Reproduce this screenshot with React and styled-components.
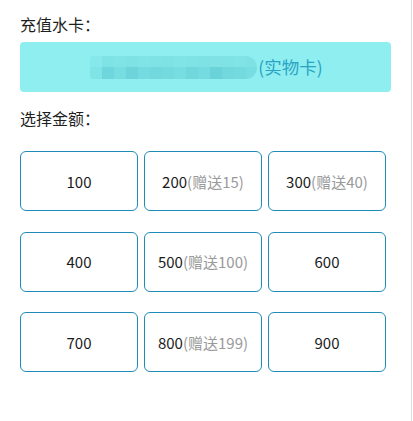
import styled, { createGlobalStyle } from 'styled-components'

const BORDER = '#1e8cb6'
const CARDBG = '#8eeef0'

const GlobalStyle = createGlobalStyle`
	html, body {
		margin: 0;
		padding: 0;
		background: #ffffff;
	}
	body {
		font-family: 'Noto Sans CJK SC', 'Noto Sans', sans-serif;
		color: #222222;
	}
`

const Page = styled.div`
	box-sizing: border-box;
	width: 412px;
	min-height: 100vh;
	padding: 12px 20px 0 20px;
	border-right: 1px solid #dcdcdc;
`

const Label = styled.div`
	font-size: 16px;
	line-height: 24px;
	color: #1f1f1f;
`

const CardBox = styled.div`
	margin: 6px 0 14px 0;
	height: 50px;
	border-radius: 4px;
	background: ${CARDBG};
	display: flex;
	align-items: center;
	justify-content: center;
	padding-left: 2px;
`

const Mosaic = styled.div`
	display: grid;
	grid-template-columns: repeat(14, 12px);
	grid-auto-rows: 11.5px;
	width: 167px;
	overflow: hidden;
	border-radius: 4px 12px 12px 4px;
`

const Cell = styled.span`
	background: ${(p) => p.$c};
`

const CardType = styled.span`
	font-size: 17.5px;
	color: #2ba3c4;
	line-height: 24px;
	margin-left: 1px;
`

const Grid = styled.div`
	display: grid;
	grid-template-columns: repeat(3, 118px);
	grid-auto-rows: 60px;
	column-gap: 6px;
	row-gap: 20.5px;
	margin-top: 21px;
`

const Amount = styled.button`
	box-sizing: border-box;
	border: 1.6px solid ${BORDER};
	border-radius: 6px;
	background: #ffffff;
	font-family: 'Noto Sans CJK SC', 'Noto Sans', sans-serif;
	font-size: 15px;
	color: #1a1a1a;
	padding: 0;
	display: flex;
	align-items: center;
	justify-content: center;
	cursor: pointer;
`

const Bonus = styled.span`
	color: #9a9a9a;
`

const top = [
	'#86e8ea', '#7fe2e5', '#80e3e6', '#7ee1e4', '#80e3e6', '#7fe2e5', '#7ee1e4',
	'#80e3e6', '#7fe2e5', '#7ee1e4', '#80e2e5', '#7fe2e5', '#80e3e6', '#7ee2e5',
]
const bottom = [
	'#80e4e7', '#6ed6dc', '#78dde1', '#6cd4da', '#76dbe0', '#72d8dd', '#74dade',
	'#78dde1', '#70d7dc', '#76dbe0', '#6ad3d9', '#72d8dd', '#74dade', '#78dde1',
]

const amounts = [
	{ v: 100 },
	{ v: 200, b: 15 },
	{ v: 300, b: 40 },
	{ v: 400 },
	{ v: 500, b: 100 },
	{ v: 600 },
	{ v: 700 },
	{ v: 800, b: 199 },
	{ v: 900 },
]

export default function App() {
	return (
		<>
			<GlobalStyle />
			<Page>
				<Label>充值水卡：</Label>
				<CardBox>
					<Mosaic>
						{[...top, ...bottom].map((c, i) => (
							<Cell key={i} $c={c} />
						))}
					</Mosaic>
					<CardType>(实物卡)</CardType>
				</CardBox>
				<Label>选择金额：</Label>
				<Grid>
					{amounts.map(({ v, b }) => (
						<Amount key={v}>
							{v}
							{b && <Bonus>(赠送{b})</Bonus>}
						</Amount>
					))}
				</Grid>
			</Page>
		</>
	)
}
